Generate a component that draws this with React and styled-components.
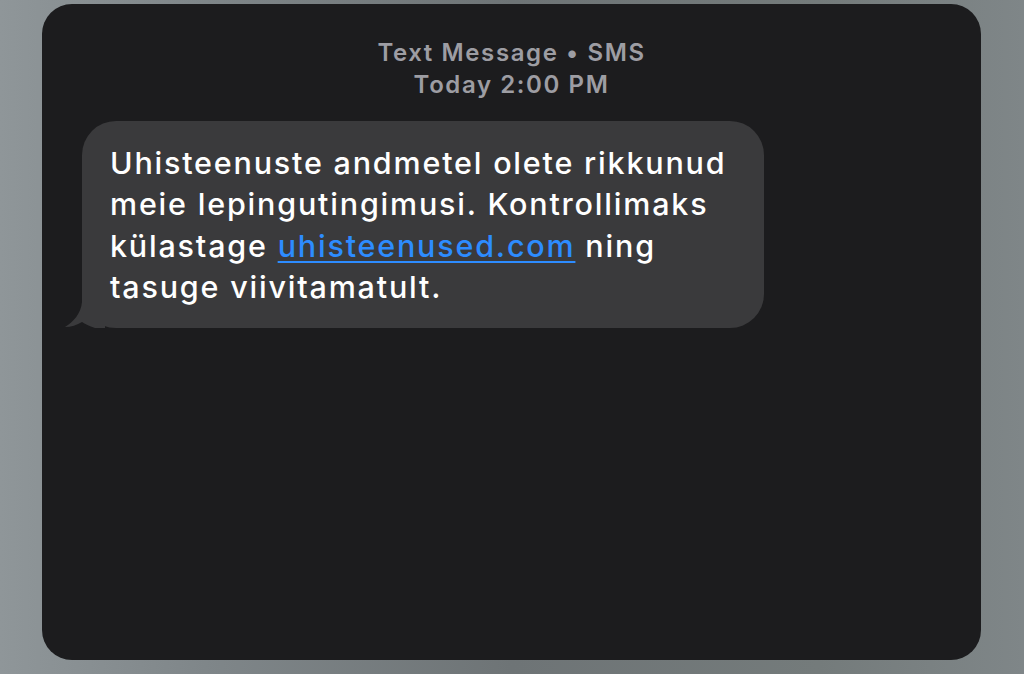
import React from "react";
import styled, { createGlobalStyle } from "styled-components";

const GlobalStyle = createGlobalStyle`
  html, body {
    margin: 0;
    padding: 0;
  }
  body {
    width: 1024px;
    height: 674px;
    overflow: hidden;
    background: linear-gradient(90deg, #8f9699 0%, #7f8689 20%, #6e7476 50%, #747b7b 80%, #7f8688 100%);
    font-family: Inter, "Liberation Sans", sans-serif;
  }
`;

const Screen = styled.div`
  width: 1024px;
  height: 674px;
  box-sizing: border-box;
  padding: 4px 43px 14px 42px;
  display: flex;
`;

const Card = styled.div`
  flex: 1;
  background: #1c1c1e;
  border-radius: 30px;
  display: flex;
  flex-direction: column;
  padding: 33px 0 0 24px;
`;

const Header = styled.div`
  align-self: center;
  margin-left: -24px;
  text-align: center;
  color: #9d9da3;
  font-size: 24px;
  font-weight: 600;
  line-height: 32px;
  letter-spacing: 1.6px;
`;

const Thread = styled.div`
  margin-top: 20px;
  display: flex;
`;

const Bubble = styled.div`
  position: relative;
  margin-left: 16px;
  width: 682px;
  box-sizing: border-box;
  background: #3a3a3c;
  border-radius: 34px;
  padding: 21px 20px 21px 28px;
  color: #ffffff;
  font-size: 30.5px;
  font-weight: 500;
  line-height: 41.3px;
  letter-spacing: 1.8px;
  white-space: nowrap;
`;

const Tail = styled.svg`
  position: absolute;
  left: -17px;
  bottom: 0;
  width: 40px;
  height: 36px;
`;

const Link = styled.span`
  color: #2d8cff;
  text-decoration: underline;
  text-underline-offset: 4px;
  text-decoration-thickness: 2px;
`;

const App = () => (
  <>
    <GlobalStyle />
    <Screen>
      <Card>
        <Header>
          Text Message • SMS
          <br />
          Today 2:00 PM
        </Header>
        <Thread>
          <Bubble>
            <Tail viewBox="0 0 40 36">
              <path
                d="M17 0 H40 V36 H30 C24 34 20 32 17 30 C12 33 6 35 0 35 C8 30 16 22 17 10 Z"
                fill="#3a3a3c"
              />
            </Tail>
            Uhisteenuste andmetel olete rikkunud
            <br />
            meie lepingutingimusi. Kontrollimaks
            <br />
            külastage <Link>uhisteenused.com</Link> ning
            <br />
            tasuge viivitamatult.
          </Bubble>
        </Thread>
      </Card>
    </Screen>
  </>
);

export default App;
